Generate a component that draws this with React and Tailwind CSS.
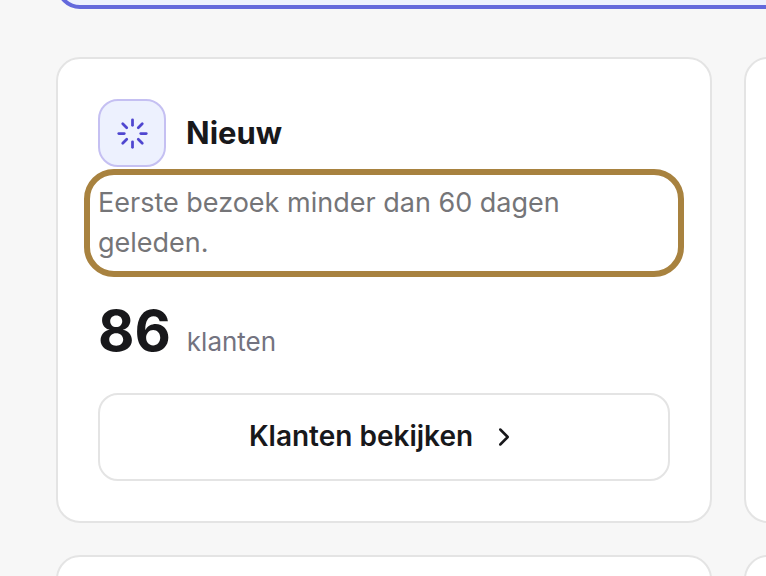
import { ChevronRight, Loader } from "lucide-react";

function Card({ children }) {
  return (
    <article className="min-h-32 rounded-3xl border-2 border-[#e4e4e4] bg-white p-10">
      {children}
    </article>
  );
}

function SegmentCard({ title, description, count }) {
  return (
    <Card>
      <header className="flex items-center gap-5">
        <span className="flex size-17 items-center justify-center rounded-[20px] border-2 border-[#c5c0f2] bg-[#edf1fe] text-[#4f46d0]">
          <Loader size={33} strokeWidth={2} aria-hidden="true" />
        </span>
        <h2 className="text-[31px] leading-10 font-bold">{title}</h2>
      </header>
      <p className="mt-4 rounded-2xl text-[27px] leading-10 text-[#757578] outline-[6px] outline-offset-8 outline-[#a8823f]">
        {description}
      </p>
      <div className="mt-10 flex items-baseline gap-4">
        <strong className="text-[56px] leading-14 font-bold">{count}</strong>
        <span className="text-[26px] leading-8 text-[#737380]">klanten</span>
      </div>
      <button
        type="button"
        className="mt-[34px] flex h-22 w-full items-center justify-center gap-4 rounded-[20px] border-2 border-[#e4e4e4] bg-white text-[28px] leading-10 font-semibold"
      >
        <span className="pb-0.5">Klanten bekijken</span>
        <ChevronRight size={30} strokeWidth={2} aria-hidden="true" />
      </button>
    </Card>
  );
}

export default function App() {
  return (
    <main className="h-screen overflow-hidden bg-[#f7f7f7] pl-14 font-['Inter',sans-serif] text-[#18181b]">
      <div className="-mt-[39px] h-12 w-[200%] rounded-3xl border-4 border-[#6469dc] bg-[#edf1fe]" />
      <section className="mt-12 grid grid-cols-[repeat(2,calc(100%-54px))] gap-8">
        <SegmentCard
          title="Nieuw"
          description="Eerste bezoek minder dan 60 dagen geleden."
          count={86}
        />
        <Card />
        <Card />
        <Card />
      </section>
    </main>
  );
}
